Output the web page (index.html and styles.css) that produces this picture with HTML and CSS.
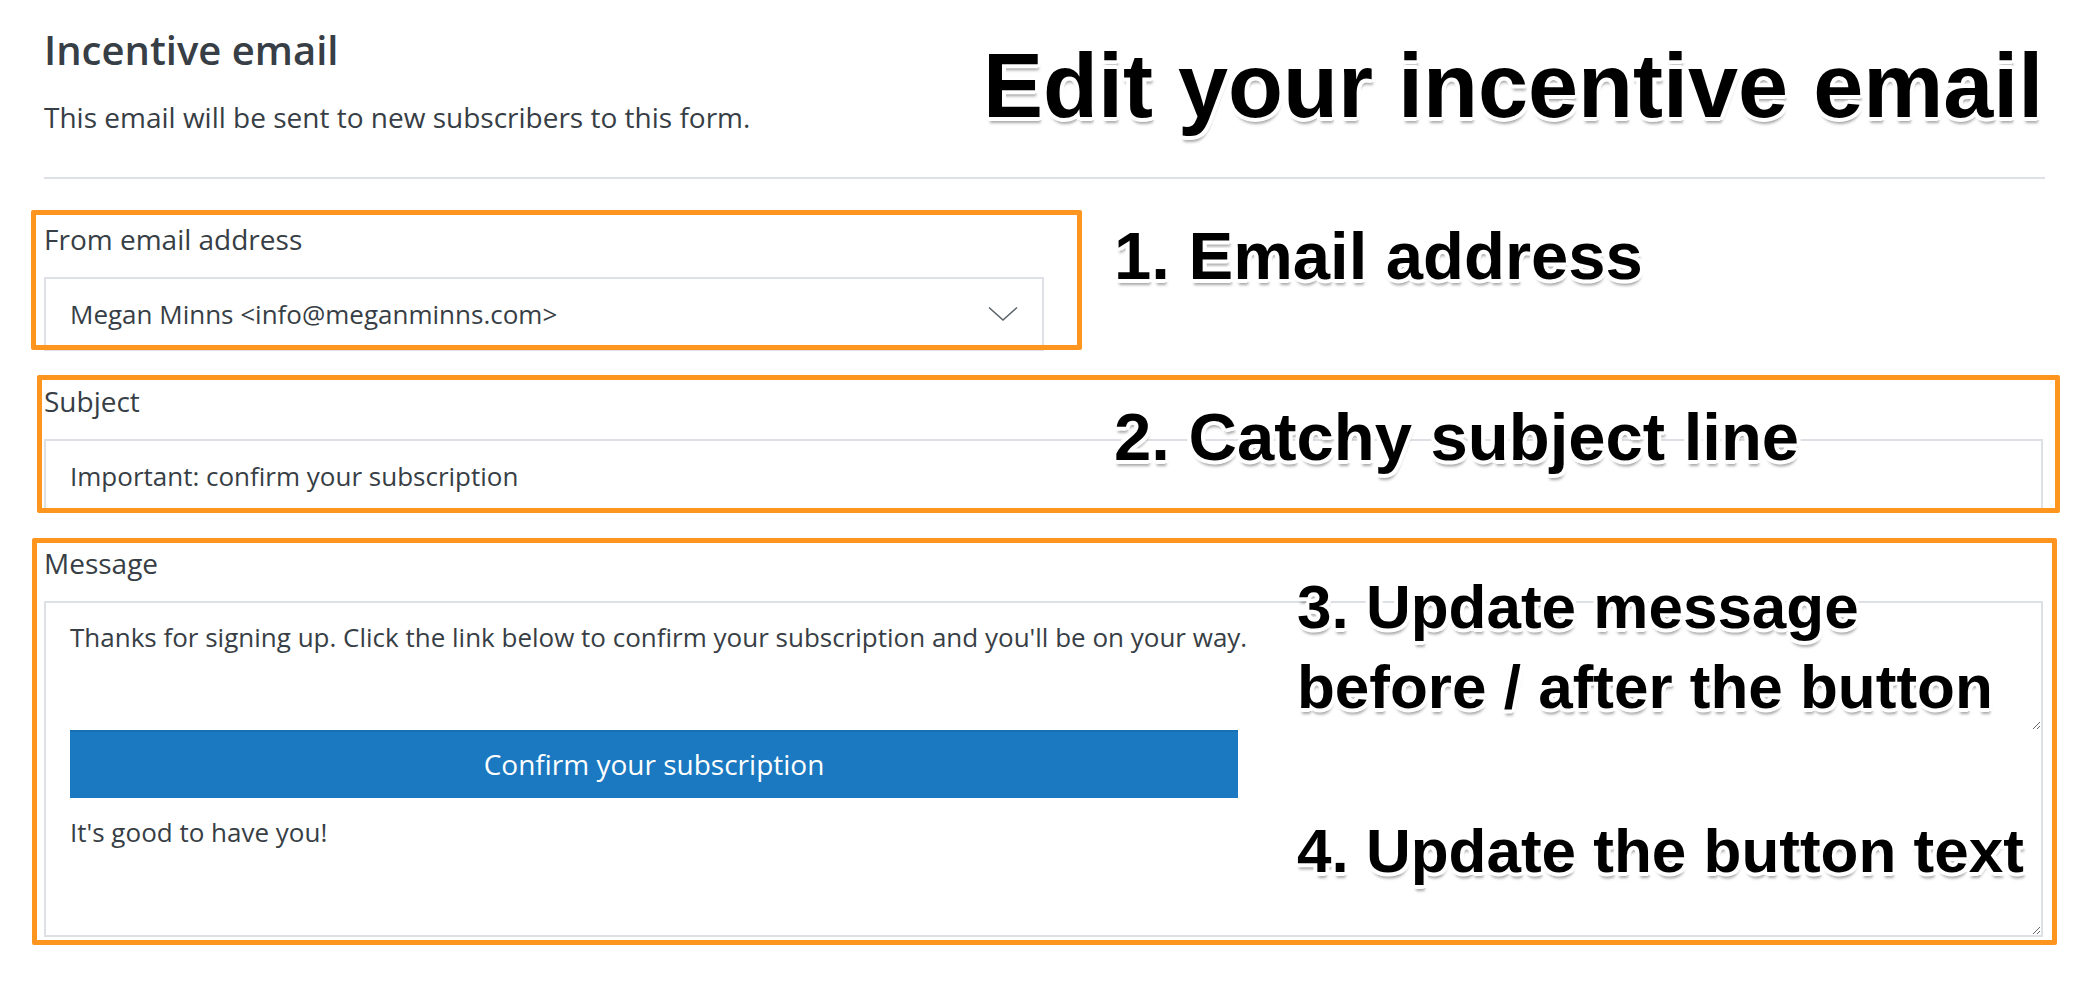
FILE: index.html
```html
<!DOCTYPE html>
<html lang="en">

<head>
  <meta charset="UTF-8">
  <meta name="viewport" content="width=device-width, initial-scale=1.0">
  <title>Incentive email</title>
  <link rel="stylesheet" href="styles.css">
</head>

<body>
  <div class="page">
    <header class="section-head">
      <h1 class="section-title">Incentive email</h1>
      <p class="section-desc">This email will be sent to new subscribers to this form.</p>
    </header>

    <hr class="divider">

    <div class="field">
      <label class="field-label">From email address</label>
      <div class="select">
        <span>Megan Minns &lt;info@meganminns.com&gt;</span>
        <svg class="chevron" width="30" height="16" viewBox="0 0 30 16">
          <polyline points="1,1.5 15,14 29,1.5" fill="none" stroke="#5b6369" stroke-width="1.6" />
        </svg>
      </div>
    </div>

    <div class="field">
      <label class="field-label" for="subject">Subject</label>
      <input class="text-input" id="subject" type="text" value="Important: confirm your subscription">
    </div>

    <div class="field">
      <label class="field-label">Message</label>
      <div class="message-box">
        <textarea class="message-text before">Thanks for signing up. Click the link below to confirm your subscription and you'll be on your way.</textarea>
        <div class="confirm-btn">Confirm your subscription</div>
        <textarea class="message-text after">It's good to have you!</textarea>
      </div>
    </div>

    <!-- annotations drawn over the form -->
    <div class="callout callout-from"></div>
    <div class="callout callout-subject"></div>
    <div class="callout callout-message"></div>

    <div class="note note-title">Edit your incentive email</div>
    <div class="note note-1">1. Email address</div>
    <div class="note note-2">2. Catchy subject line</div>
    <div class="note note-3">3. Update message<br>before / after the button</div>
    <div class="note note-4">4. Update the button text</div>
  </div>
</body>

</html>
```

FILE: styles.css
```css
:root {
  --text-color: #373e45;
  --border-color: #dde1e5;
  --primary-color: #1a79c0;
  --callout-color: #fd951f;
}

* {
  box-sizing: border-box;
}

body {
  margin: 0;
  background: #fff;
  font-family: 'Open Sans', 'Noto Sans', sans-serif;
  color: var(--text-color);
}

.page {
  position: relative;
  width: 2094px;
  min-height: 989px;
  padding: 26px 49px 0 44px;
}

.section-title {
  margin: 0;
  font-size: 40px;
  line-height: 48px;
  font-weight: 600;
}

.section-desc {
  margin: 23px 0 0;
  font-size: 28px;
  line-height: 40px;
}

.divider {
  margin: 40px 0 0;
  border: none;
  height: 2px;
  background: var(--border-color);
}

.field {
  margin-top: 30px;
  width: 1999px;
}

.divider + .field {
  margin-top: 40px;
}

.field-label {
  display: block;
  font-size: 28px;
  line-height: 40px;
  margin-bottom: 18px;
}

.select {
  width: 1000px;
  height: 74px;
  border: 2px solid var(--border-color);
  padding: 0 24px 0 24px;
  display: flex;
  align-items: center;
  justify-content: space-between;
  font-size: 26px;
}

.text-input {
  display: block;
  width: 100%;
  height: 74px;
  border: 2px solid var(--border-color);
  padding: 0 24px;
  font-family: inherit;
  font-size: 26px;
  color: var(--text-color);
  outline: none;
}

.message-box {
  border: 2px solid var(--border-color);
}

.message-text {
  display: block;
  width: 100%;
  border: none;
  outline: none;
  resize: vertical;
  padding: 15px 24px;
  font-family: inherit;
  font-size: 26px;
  line-height: 38px;
  color: var(--text-color);
  overflow: hidden;
}

.message-text.before {
  height: 127px;
}

.message-text.after {
  height: 137px;
}

.confirm-btn {
  margin-left: 24px;
  width: 1168px;
  height: 68px;
  background: var(--primary-color);
  border-top: 2px solid #1670b3;
  color: #fff;
  font-size: 28px;
  line-height: 64px;
  text-align: center;
}

.callout {
  position: absolute;
  border: 5px solid var(--callout-color);
  border-radius: 2px;
}

.callout-from {
  left: 31px;
  top: 210px;
  width: 1051px;
  height: 140px;
}

.callout-subject {
  left: 37px;
  top: 375px;
  width: 2023px;
  height: 138px;
}

.callout-message {
  left: 32px;
  top: 538px;
  width: 2025px;
  height: 407px;
}

.note {
  position: absolute;
  font-family: 'Liberation Sans', Arial, sans-serif;
  font-weight: 700;
  color: #000;
  line-height: 1;
  white-space: nowrap;
  text-shadow:
    0 -4px 0 #fff, 3px -3px 0 #fff, 4px 0 0 #fff, 3px 3px 0 #fff,
    0 4px 0 #fff, -3px 3px 0 #fff, -4px 0 0 #fff, -3px -3px 0 #fff,
    2px -2px 0 #fff, -2px 2px 0 #fff, 2px 2px 0 #fff, -2px -2px 0 #fff,
    1px 6px 3px rgba(0, 0, 0, 0.35);
}

.note-title {
  left: 983px;
  top: 41px;
  font-size: 90px;
}

.note-1 {
  left: 1114px;
  top: 222px;
  font-size: 67px;
}

.note-2 {
  left: 1114px;
  top: 403px;
  font-size: 67px;
}

.note-3 {
  left: 1297px;
  top: 567px;
  font-size: 62px;
  line-height: 80px;
}

.note-4 {
  left: 1297px;
  top: 820px;
  font-size: 62px;
}
```
